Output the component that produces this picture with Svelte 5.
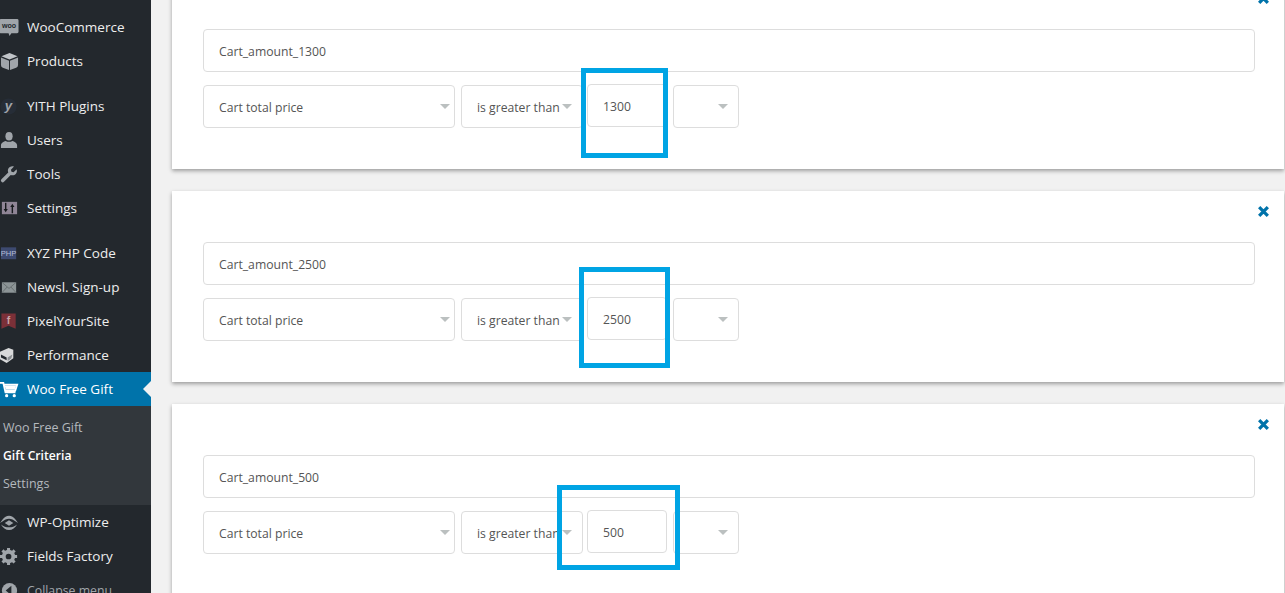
<script>
	const menu = [
		{ label: 'WooCommerce', icon: 'woo' },
		{ label: 'Products', icon: 'box', sepAfter: true },
		{ label: 'YITH Plugins', icon: 'yith' },
		{ label: 'Users', icon: 'user' },
		{ label: 'Tools', icon: 'wrench' },
		{ label: 'Settings', icon: 'sliders', sepAfter: true },
		{ label: 'XYZ PHP Code', icon: 'php' },
		{ label: 'Newsl. Sign-up', icon: 'mail' },
		{ label: 'PixelYourSite', icon: 'pixel' },
		{ label: 'Performance', icon: 'cube' },
		{ label: 'Woo Free Gift', icon: 'cart', current: true },
		{ label: 'WP-Optimize', icon: 'optimize' },
		{ label: 'Fields Factory', icon: 'gear' },
		{ label: 'Collapse menu', icon: 'collapse', dim: true }
	];

	const submenu = [
		{ label: 'Woo Free Gift' },
		{ label: 'Gift Criteria', active: true },
		{ label: 'Settings' }
	];

	const criteria = [
		{ name: 'Cart_amount_1300', value: '1300', mark: 'mark-a' },
		{ name: 'Cart_amount_2500', value: '2500', mark: 'mark-b' },
		{ name: 'Cart_amount_500', value: '500', mark: 'mark-c' }
	];
</script>

<div class="page">
	<nav class="sidebar">
		{#each menu as item}
			<div class="item" class:current={item.current} class:dim={item.dim} class:sep={item.sepAfter}>
				<svg class="icon" viewBox="0 0 20 20" aria-hidden="true">
					{#if item.icon === 'woo'}
						<path d="M1 1h17a1.500 1.500 0 0 1 1.500 1.500v12a1.500 1.500 0 0 1-1.500 1.500h-6l-2 3-1-3H1a1.500 1.500 0 0 1-1.500-1.500v-12A1.500 1.500 0 0 1 1 1z" fill="#a0a5aa" />
						<text x="9.500" y="11" text-anchor="middle" font-size="7.500" font-weight="700" fill="#23282d">woo</text>
					{:else if item.icon === 'box'}
						<path d="M10 1l8.500 3.500L10 8 1.500 4.500z" fill="#c0c4c8" />
						<path d="M1 5.800l8.500 3.500V19L3 16.500a3 3 0 0 1-2-2.800zM10.500 9.300L19 5.800v7.900a3 3 0 0 1-2 2.800L10.500 19z" fill="#a0a5aa" />
					{:else if item.icon === 'yith'}
						<circle cx="9" cy="10" r="8.500" fill="#262d37" />
						<text x="9" y="14" text-anchor="middle" font-size="14" font-weight="700" font-style="italic" fill="#a0a5aa">y</text>
					{:else if item.icon === 'user'}
						<ellipse cx="9.500" cy="5.500" rx="3.800" ry="4.500" fill="#a0a5aa" />
						<path d="M1 18v-3c0-2.500 3-4 5-4.500 2 1.200 5 1.200 7 0 2 .5 5 2 5 4.500v3z" fill="#a0a5aa" />
					{:else if item.icon === 'wrench'}
						<path d="M17.500 4.500l-3.200 3.200-2.200-.6-.6-2.200 3.200-3.200c-2.500-.8-5 .2-6 2.300-.6 1.300-.5 2.700 0 3.900L1.500 15a1.900 1.900 0 0 0 2.700 2.700l7.100-7.200c1.200.5 2.600.6 3.900 0 2.200-1.100 3.200-3.500 2.300-6z" fill="#a0a5aa" />
					{:else if item.icon === 'sliders'}
						<rect x="2" y="3" width="16" height="13" fill="#8f8596" />
						<path d="M6 4v7" stroke="#16191c" stroke-width="1.500" />
						<path d="M3.800 10.500L6 14l2.200-3.500z" fill="#16191c" />
						<path d="M13 15V8" stroke="#16191c" stroke-width="1.500" />
						<path d="M10.800 8.500L13 5l2.200 3.500z" fill="#16191c" />
					{:else if item.icon === 'php'}
						<rect x="1" y="3.500" width="16" height="12.500" fill="#3d4a70" />
						<text x="9" y="12.800" text-anchor="middle" font-size="8" fill="#b6bfd8">PHP</text>
					{:else if item.icon === 'mail'}
						<rect x="2" y="4.500" width="15" height="11" fill="#8c9496" />
						<path d="M2 4.500l7.500 6.500L17 4.500M2 15.500l5.500-6M17 15.500l-5.500-6" stroke="#5d6466" fill="none" stroke-width=".8" />
					{:else if item.icon === 'pixel'}
						<path d="M1.500 1.500h15v16l-7.500-3-7.500 3z" fill="#7b3038" />
						<text x="9" y="12.500" text-anchor="middle" font-size="11" font-weight="700" fill="#c9a5a8">f</text>
					{:else if item.icon === 'cube'}
						<path d="M0 6l9-4 5 2v9l-7 5-7-4z" fill="#d8d9da" />
						<path d="M1 9l6 3v3l-6-3z" fill="#23282d" />
						<path d="M8 12l5-3-1 4-4 3z" fill="#8b8f93" />
					{:else if item.icon === 'cart'}
						<path d="M0 3h3.500l2.300 10h10.500M4 5h14l-2 6H5.500" stroke="#fff" stroke-width="2" fill="none" />
						<path d="M5 6h12l-1.500 4H6z" fill="#fff" />
						<circle cx="7" cy="16.500" r="1.700" fill="#fff" />
						<circle cx="15" cy="16.500" r="1.700" fill="#fff" />
					{:else if item.icon === 'optimize'}
						<path d="M0 10.500L2.500 7C4.500 4.500 7 3 9.500 3s5 1.500 7 4L19 10.500 16.500 9C14.500 7.200 12 6 9.500 6S4.500 7.200 2.500 9z" fill="#a0a5aa" />
						<path d="M1 12c2 3.500 5 6 8.500 6s6.500-2.500 8.500-6c-2.500 2-5.500 3-8.500 3S3.500 14 1 12z" fill="#a0a5aa" />
						<path d="M9.500 7.500l4.500 3-4.500 3-4.500-3z" fill="#a0a5aa" />
					{:else if item.icon === 'gear'}
						<circle cx="9" cy="10" r="5" fill="none" stroke="#a0a5aa" stroke-width="4" />
						<path d="M9 1v18M0 10h18M2.600 3.600l12.800 12.800M15.400 3.600L2.600 16.400" stroke="#a0a5aa" stroke-width="3.200" stroke-dasharray="3.500 11 3.500" />
					{:else}
						<circle cx="10" cy="10" r="8" fill="#a0a5aa" />
						<path d="M12 5v10l-6-5z" fill="#23282d" />
					{/if}
				</svg>
				<span>{item.label}</span>
			</div>
			{#if item.current}
				<div class="sub">
					{#each submenu as s}
						<div class="sub-item" class:active={s.active}>{s.label}</div>
					{/each}
				</div>
			{/if}
		{/each}
	</nav>

	<main class="content">
		{#each criteria as c}
			<section class="card">
				<svg class="close" viewBox="0 0 12 12" aria-hidden="true">
					<path d="M2 2l8 8M10 2l-8 8" stroke="#0073aa" stroke-width="3" />
				</svg>
				<input class="field name" value={c.name} />
				<div class="row">
					<div class="field select w-type">Cart total price<i class="caret"></i></div>
					<div class="field select w-op">is greater than<i class="caret"></i></div>
					<input class="field amount" value={c.value} />
					<div class="field select w-unit"><i class="caret"></i></div>
				</div>
				<div class="mark {c.mark}"></div>
			</section>
		{/each}
	</main>
</div>

<style>
	:global(body) {
		margin: 0;
		overflow: hidden;
		background: #f1f1f1;
	}

	.page {
		display: flex;
		height: 593px;
		overflow: hidden;
		font-family: 'Open Sans', sans-serif;
	}

	.sidebar {
		flex: 0 0 151px;
		box-sizing: border-box;
		padding-top: 10px;
		background: #23282d;
		color: #eee;
		font-size: 13.5px;
	}

	.item {
		position: relative;
		display: flex;
		align-items: center;
		gap: 8px;
		height: 34px;
		white-space: nowrap;
	}

	.item.sep {
		margin-bottom: 11px;
	}

	.item.dim {
		color: #a0a5aa;
		font-size: 12.3px;
	}

	.item.current {
		background: #0073aa;
		color: #fff;
	}

	.item.current::after {
		content: '';
		position: absolute;
		right: 0;
		top: 50%;
		margin-top: -8px;
		border: 8px solid transparent;
		border-left-width: 0;
		border-right-color: #f1f1f1;
	}

	.icon {
		flex: 0 0 19px;
		width: 19px;
		height: 19px;
		font-family: 'Liberation Sans', sans-serif;
	}

	.sub {
		padding: 8px 0 7px;
		background: #32373c;
	}

	.sub-item {
		height: 28px;
		line-height: 28px;
		padding-left: 3px;
		font-size: 12.5px;
		color: #b4b9be;
	}

	.sub-item.active {
		color: #fff;
		font-size: 12.2px;
		font-weight: 600;
	}

	.content {
		flex: 1;
		min-width: 0;
		display: flex;
		flex-direction: column;
		gap: 22px;
		margin-top: -22px;
		padding: 0 1px 0 21px;
	}

	.card {
		position: relative;
		flex: 0 0 191px;
		box-sizing: border-box;
		padding: 51px 29px 0 31px;
		background: #fff;
		box-shadow: 0 2px 4px rgba(0, 0, 0, 0.35);
	}

	.close {
		position: absolute;
		top: 14px;
		right: 14px;
		width: 13px;
		height: 13px;
	}

	.field {
		box-sizing: border-box;
		height: 43px;
		padding: 1px 15px 0;
		border: 1px solid #ddd;
		border-radius: 4px;
		background: #fff;
		color: #555;
		font: 12.2px 'Open Sans', sans-serif;
		outline: none;
	}

	.name {
		display: block;
		width: 100%;
	}

	.row {
		display: flex;
		gap: 6px;
		margin-top: 13px;
	}

	.select {
		position: relative;
		display: flex;
		align-items: center;
		white-space: nowrap;
	}

	.w-type {
		width: 252px;
	}

	.w-op {
		width: 122px;
		margin-right: -2px;
	}

	.amount {
		width: 80px;
		margin-top: -1px;
	}

	.w-unit {
		width: 66px;
	}

	.caret {
		position: absolute;
		top: 18px;
		right: 11px;
		border: 5px solid transparent;
		border-top-color: #bbc0c0;
		border-bottom-width: 0;
	}

	.w-type .caret {
		right: 4px;
	}

	.w-op .caret {
		right: 10px;
	}

	.w-unit .caret {
		right: 10px;
	}

	.mark {
		position: absolute;
		box-sizing: border-box;
		border: 5px solid #00a4e4;
	}

	.mark-a {
		left: 409px;
		top: 90px;
		width: 87px;
		height: 90px;
	}

	.mark-b {
		left: 407px;
		top: 76px;
		width: 91px;
		height: 101px;
	}

	.mark-c {
		left: 385px;
		top: 81px;
		width: 123px;
		height: 85px;
	}
</style>
